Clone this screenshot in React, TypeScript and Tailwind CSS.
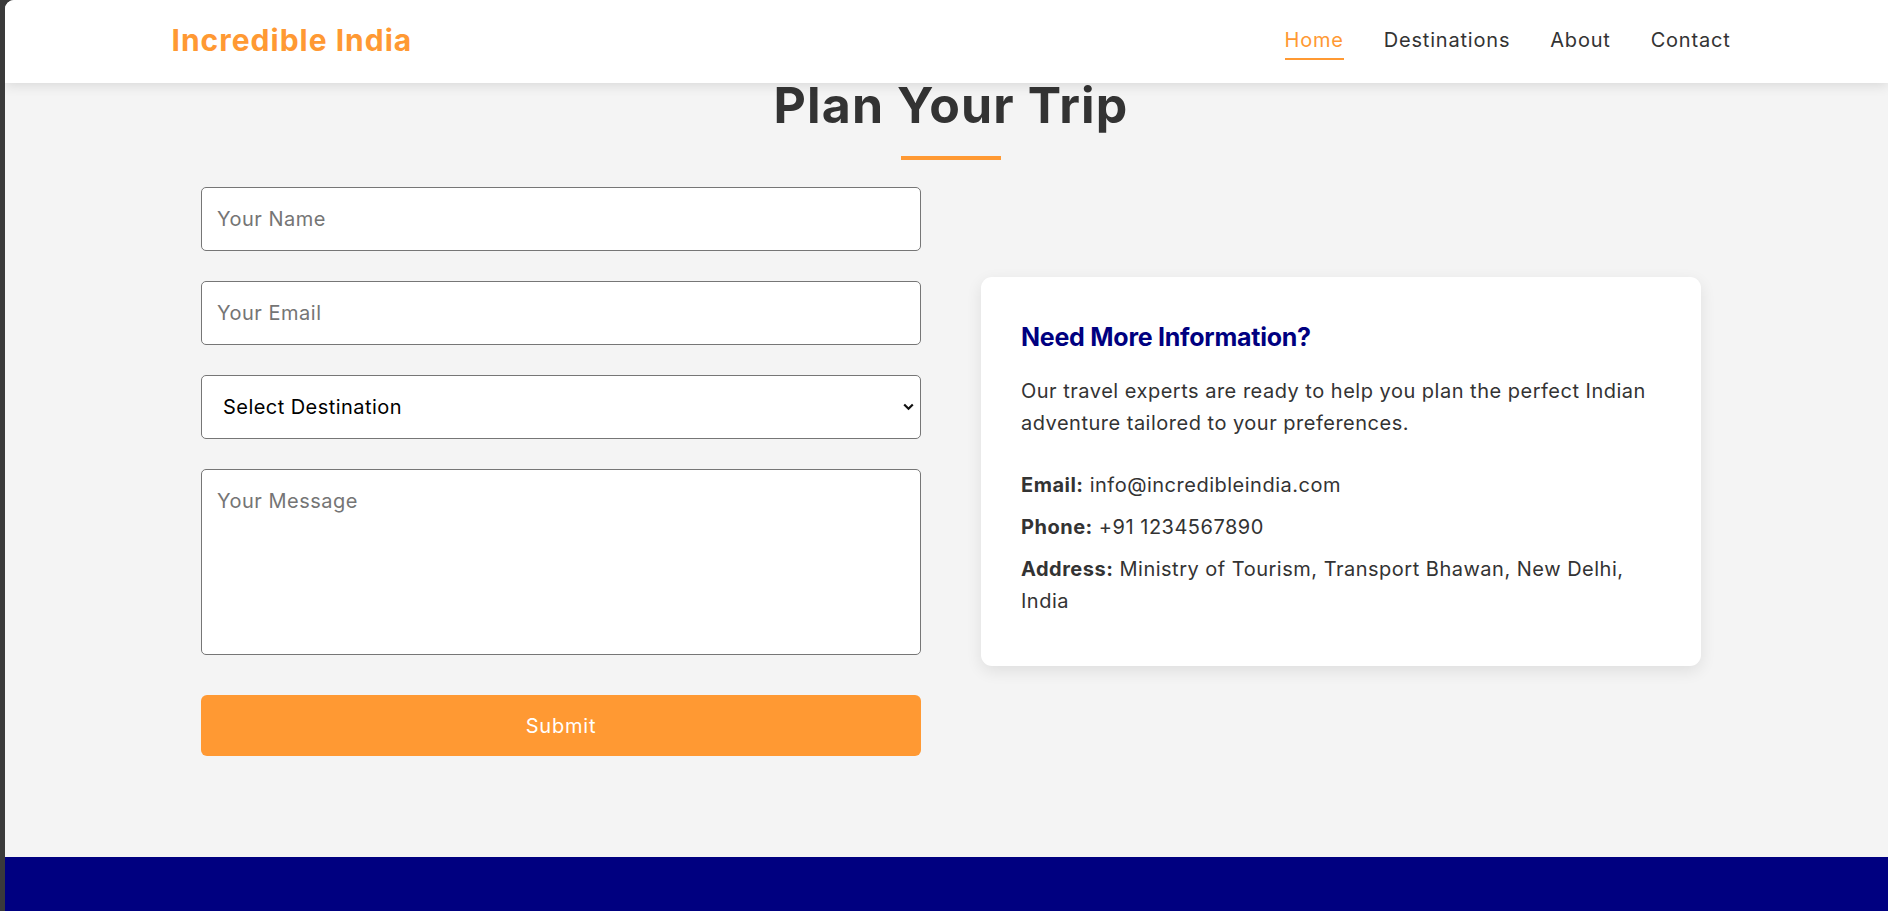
import React from "react";

const font = { fontFamily: "Inter, 'Noto Sans', sans-serif" };

export default function App() {
  return (
    <div className="flex min-h-screen bg-[#3a3a3a]" style={font}>
      <div className="w-[5px] shrink-0" />
      <div className="relative flex-1 rounded-tl-[9px] overflow-hidden bg-[#f4f4f4] flex flex-col min-h-screen">
        <header className="absolute top-0 left-0 right-0 z-10 h-[83px] bg-white shadow-[0_2px_12px_rgba(0,0,0,0.12)] pl-[9px]">
          <div className="mx-auto w-[1559px] h-full flex items-center justify-between">
            <span className="text-[30px] leading-[45px] font-bold text-[#ff9933] tracking-[1px] -mt-[2px]">Incredible India</span>
            <nav className="flex items-center gap-[40px] text-[20px] leading-[30px] pt-[1px] tracking-[0.8px]">
              <a className="text-[#ff9933] border-b-[2.5px] border-[#ff9933] pb-[3px]">Home</a>
              <a className="text-[#333] border-b-[2.5px] border-transparent pb-[3px]">Destinations</a>
              <a className="text-[#333] border-b-[2.5px] border-transparent pb-[3px]">About</a>
              <a className="text-[#333] border-b-[2.5px] border-transparent pb-[3px]">Contact</a>
            </nav>
          </div>
        </header>

        <main className="pl-[9px] pt-[75px] flex-1 tracking-[0.5px]">
          <div className="mx-auto w-[1500px]">
            <h1 className="text-center text-[50px] leading-[60px] font-bold text-[#333] tracking-[1.1px]">Plan Your Trip</h1>
            <div className="mx-auto mt-[21px] w-[100px] h-[3.75px] bg-[#ff9933]" />

            <div className="mt-[27px] grid grid-cols-2 gap-[60px] items-center">
              <form className="flex flex-col" onSubmit={(e) => e.preventDefault()}>
                <input
                  type="text"
                  placeholder="Your Name"
                  className="h-[64px] w-full rounded-[5px] border border-[#767676] bg-white px-[15px] text-[20px] tracking-[0.5px] placeholder:text-[#757575] outline-none"
                />
                <input
                  type="email"
                  placeholder="Your Email"
                  className="mt-[30px] h-[64px] w-full rounded-[5px] border border-[#767676] bg-white px-[15px] text-[20px] tracking-[0.5px] placeholder:text-[#757575] outline-none"
                />
                <div className="relative mt-[30px]">
                  <select
                    defaultValue=""
                    className="h-[64px] w-full appearance-none rounded-[5px] border border-[#767676] bg-white pl-[21px] pr-[40px] text-[20px] tracking-[0.45px] text-black outline-none"
                  >
                    <option value="">Select Destination</option>
                  </select>
                  <svg
                    className="pointer-events-none absolute right-[7px] top-[28px]"
                    width="11"
                    height="8"
                    viewBox="0 0 11 8"
                  >
                    <polyline points="1.2,1.5 5.5,5.8 9.8,1.5" fill="none" stroke="#111" strokeWidth="2.2" />
                  </svg>
                </div>
                <textarea
                  placeholder="Your Message"
                  className="mt-[30px] h-[186px] w-full resize-none rounded-[5px] border border-[#767676] bg-white px-[15px] py-[16px] text-[20px] leading-[30px] tracking-[0.5px] placeholder:text-[#757575] outline-none"
                />
                <button
                  type="submit"
                  className="mt-[40px] h-[61px] w-full rounded-[6px] bg-[#ff9933] pt-[1px] text-[20px] tracking-[0.8px] text-white"
                >
                  Submit
                </button>
              </form>

              <div className="rounded-[11px] bg-white pt-[42px] pb-[39px] px-[40px] shadow-[0_5px_16px_rgba(0,0,0,0.09)]">
                <h3 className="text-[25px] leading-[37.5px] font-bold text-[#000080] mb-[19px] tracking-[-0.25px]">Need More Information?</h3>
                <p className="text-[20px] leading-[32px] text-[#333] mb-[30px]">
                  Our travel experts are ready to help you plan the perfect Indian adventure tailored to your preferences.
                </p>
                <p className="text-[20px] leading-[32px] text-[#333] mb-[10px]">
                  <strong className="font-bold">Email:</strong> info@incredibleindia.com
                </p>
                <p className="text-[20px] leading-[32px] text-[#333] mb-[10px]">
                  <strong className="font-bold">Phone:</strong> +91 1234567890
                </p>
                <p className="text-[20px] leading-[32px] text-[#333] mb-[10px]">
                  <strong className="font-bold">Address:</strong>{" "}
                  <span>Ministry of Tourism, Transport Bhawan, New Delhi,</span>{" "}
                  <span className="inline-block">India</span>
                </p>
              </div>
            </div>
          </div>
        </main>

        <footer className="mt-[100px] h-[54px] bg-[#000080]" />
      </div>
    </div>
  );
}
